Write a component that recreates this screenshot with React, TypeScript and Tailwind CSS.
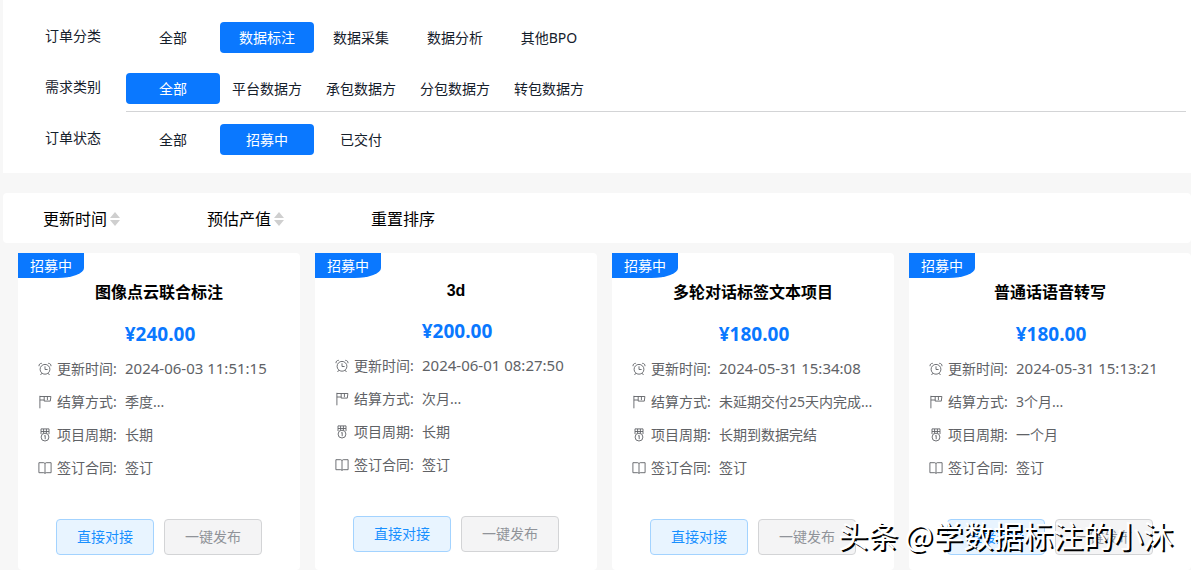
import { useState } from 'react'
import type { ReactNode } from 'react'
import clsx from 'clsx'

const FILTERS = [
  { label: '订单分类', options: ['全部', '数据标注', '数据采集', '数据分析', '其他BPO'], initial: 1 },
  { label: '需求类别', options: ['全部', '平台数据方', '承包数据方', '分包数据方', '转包数据方'], initial: 0, divider: true },
  { label: '订单状态', options: ['全部', '招募中', '已交付'], initial: 1 },
]

const ORDERS = [
  { title: '图像点云联合标注', price: '240.00', updated: '2024-06-03 11:51:15', settle: '季度...', period: '长期', contract: '签订' },
  { title: '3d', price: '200.00', updated: '2024-06-01 08:27:50', settle: '次月...', period: '长期', contract: '签订' },
  { title: '多轮对话标签文本项目', price: '180.00', updated: '2024-05-31 15:34:08', settle: '未延期交付25天内完成...', period: '长期到数据完结', contract: '签订' },
  { title: '普通话语音转写', price: '180.00', updated: '2024-05-31 15:13:21', settle: '3个月...', period: '一个月', contract: '签订' },
]

type Order = (typeof ORDERS)[number]

function Icon({ children }: { children: ReactNode }) {
  return (
    <svg viewBox="0 0 14 14" className="w-3.5 h-3.5 shrink-0" fill="none" stroke="currentColor" strokeWidth="0.9" aria-hidden="true">
      {children}
    </svg>
  )
}

const ClockIcon = () => (
  <Icon>
    <circle cx="7" cy="7.3" r="4.9" />
    <path d="M7 4.3v3.2h2.6M3.6 11.3l-1 1.7M10.4 11.3l1 1.7M1 4.2C.8 2.4 2 1.3 3.8 1.3M13 4.2c.2-1.8-1-2.9-2.8-2.9" />
  </Icon>
)

const FlagIcon = () => (
  <Icon>
    <path d="M1.9 .8v12.5M1.9 1.5h11l-.6 4.6H6.2V1.5M9.4 1.5v3.6M1.9 5h4.3" />
  </Icon>
)

const MedalIcon = () => (
  <Icon>
    <circle cx="7" cy="9.1" r="3.9" />
    <path d="M3 6V.9h8V6M5.6 1v4.3M8.4 1v4.3M3 3.5h8M6.2 8l1-.6v3.8" />
  </Icon>
)

const BookIcon = () => (
  <Icon>
    <path d="M7 2.5v9.8M7 2.5L5.8 1.7H.9v10h4.9l1.2.6 1.2-.6h4.9v-10H8.2z" />
  </Icon>
)

function FilterRow({ label, options, initial, divider }: (typeof FILTERS)[number]) {
  const [active, setActive] = useState(initial)

  return (
    <div className="flex pl-[42px] pr-[5px]" role="group" aria-label={label}>
      <span className="w-[81px] shrink-0 pt-4 leading-5">{label}</span>
      <div className={clsx('flex flex-1 pt-3 pb-[7px] border-b', divider ? 'border-[#d3d4d6]' : 'border-transparent')}>
        {options.map((option, i) => (
          <button
            key={option}
            onClick={() => setActive(i)}
            className={clsx('w-[94px] h-[31px] rounded text-center', i === active && 'bg-[#0a78ff] text-white')}
          >
            {option}
          </button>
        ))}
      </div>
    </div>
  )
}

function SortButton({ label, arrows }: { label: string; arrows?: boolean }) {
  return (
    <button className="w-[164px] flex items-center gap-[3px] text-base text-black">
      {label}
      {arrows && (
        <svg viewBox="0 0 10 14" className="w-2.5 h-3.5" fill="#cfcfcf" aria-hidden="true">
          <path d="M5 0l5 6H0zM5 14l5-6H0z" />
        </svg>
      )}
    </button>
  )
}

function OrderCard({ order }: { order: Order }) {
  const rows = [
    { icon: <ClockIcon />, label: '更新时间', value: order.updated, large: true },
    { icon: <FlagIcon />, label: '结算方式', value: order.settle },
    { icon: <MedalIcon />, label: '项目周期', value: order.period },
    { icon: <BookIcon />, label: '签订合同', value: order.contract },
  ]
  // latin-only titles sit on a shorter line
  const latin = /^[\x00-\x7f]+$/.test(order.title)

  return (
    <article className="relative bg-white rounded pt-[29px] pb-[15px]">
      <span className="absolute top-0 left-0 w-[66px] h-[25px] flex items-center justify-center bg-[#0a78ff] text-white rounded-br-[40%]">招募中</span>
      <h3 className={clsx("text-center text-base font-bold text-black font-['Liberation_Sans','Noto_Sans_CJK_SC',sans-serif]", latin ? 'leading-[18px]' : 'leading-[21px]')}>
        {order.title}
      </h3>
      <p className="mt-[18px] pl-0.5 text-center text-[19px] leading-[26px] font-bold text-[#0a78ff]">¥{order.price}</p>
      <dl className="mt-[5px] px-5 text-[#606266]">
        {rows.map((row) => (
          <div key={row.label} className="flex items-center h-[33px]">
            <dt className="w-[87px] shrink-0 flex items-center gap-[5px]">
              {row.icon}
              {row.label}:
            </dt>
            <dd className={clsx('whitespace-nowrap', row.large && 'text-[15px]')}>{row.value}</dd>
          </div>
        ))}
      </dl>
      <div className="mt-[35px] flex justify-center gap-2.5">
        <button className="w-[98px] h-9 rounded border border-[#a3d3ff] bg-[#e8f4ff] text-[#1890ff]">直接对接</button>
        <button className="w-[98px] h-9 rounded border border-[#d3d4d6] bg-[#f4f4f5] text-[#909399]">一键发布</button>
      </div>
    </article>
  )
}

export default function App() {
  return (
    <div className="relative min-h-screen flex flex-col bg-[#f7f7f7] text-sm text-[#15202b] font-['Noto_Sans','Noto_Sans_CJK_SC',sans-serif]">
      <section className="ml-[3px] py-2.5 bg-white">
        {FILTERS.map((filter) => (
          <FilterRow key={filter.label} {...filter} />
        ))}
      </section>

      <nav className="ml-[3px] mt-5 h-[50px] pl-10 pt-0.5 flex bg-white rounded">
        <SortButton label="更新时间" arrows />
        <SortButton label="预估产值" arrows />
        <SortButton label="重置排序" />
      </nav>

      <main className="flex-1 mt-2.5 pl-[18px] grid grid-cols-4 gap-[15px]">
        {ORDERS.map((order) => (
          <OrderCard key={order.title} order={order} />
        ))}
      </main>

      <p className="absolute right-[18px] bottom-4 text-[30px] leading-10 whitespace-nowrap text-white pointer-events-none font-['Noto_Sans_CJK_SC',sans-serif] [text-shadow:2px_2px_0_#000]">
        头条 @学数据标注的小沐
      </p>
    </div>
  )
}
